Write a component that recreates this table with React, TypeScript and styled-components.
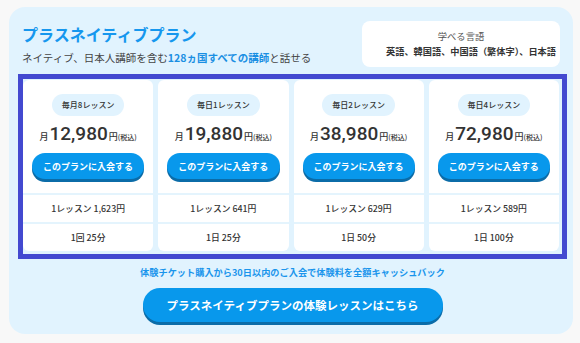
import React from 'react';
import styled, { createGlobalStyle } from 'styled-components';

const GlobalStyle = createGlobalStyle`
  html, body {
    margin: 0;
    padding: 0;
    background: #f8f8f8;
    font-family: "Noto Sans CJK JP", "Noto Sans", sans-serif;
    color: #333;
  }
`;

const Page = styled.div`
  padding: 7px 7px 6px 9px;
`;

const Panel = styled.section`
  background: #e1f3fe;
  border-radius: 16px;
  padding: 0 6px 12px 9px;
  display: flex;
  flex-direction: column;
  align-items: stretch;
`;

const Header = styled.header`
  display: flex;
  justify-content: space-between;
  align-items: flex-start;
  padding: 14px 7px 7px 4px;
`;

const TitleBlock = styled.div`
  padding-top: 3px;
`;

const Title = styled.h2`
  margin: 0;
  font-size: 16px;
  line-height: 20px;
  font-weight: 700;
  color: #1697ee;
`;

const Lead = styled.p`
  margin: 6px 0 0;
  font-size: 10.5px;
  line-height: 16px;
  color: #444;
  white-space: nowrap;
`;

const Accent = styled.span`
  color: #1a8fe3;
  font-weight: 600;
`;

const LangBox = styled.div`
  width: 198px;
  height: 46px;
  box-sizing: border-box;
  background: #fff;
  border-radius: 8px;
  padding: 8px 4px 0;
  display: flex;
  flex-direction: column;
`;

const LangLabel = styled.div`
  font-size: 9.3px;
  line-height: 14px;
  color: #555;
  text-align: center;
`;

const LangList = styled.div`
  font-size: 9.2px;
  line-height: 16px;
  font-weight: 700;
  color: #333;
  text-align: right;
  white-space: nowrap;
`;

const PlanFrame = styled.div`
  border: 5px solid #4349d0;
  padding: 1px 3px 3px 0;
  display: grid;
  grid-template-columns: repeat(4, 1fr);
  gap: 5px;
`;

const Card = styled.div`
  background: #fff;
  border-radius: 6px;
  display: flex;
  flex-direction: column;
`;

const CardTop = styled.div`
  display: flex;
  flex-direction: column;
  align-items: center;
  padding: 14px 9px 14px;
`;

const Badge = styled.span`
  height: 22px;
  line-height: 22px;
  padding: 0 10px;
  border-radius: 11px;
  background: #e1f3fe;
  font-size: 8px;
  font-weight: 500;
  color: #333;
`;

const Price = styled.div`
  margin-top: 6px;
  height: 24px;
  display: flex;
  align-items: baseline;
  color: #333;
  white-space: nowrap;
`;

const Unit = styled.span<{ $size: number }>`
  font-size: ${p => p.$size}px;
  font-weight: 500;
`;

const Amount = styled.span`
  font-family: Roboto, "Noto Sans", sans-serif;
  font-size: 19px;
  line-height: 24px;
  font-weight: 500;
  margin: 0 1px;
`;

const JoinButton = styled.button`
  margin-top: 7px;
  width: 100%;
  height: 26px;
  border: none;
  border-radius: 13px;
  background: #0898ec;
  box-shadow: 0 3px 0 #0b6ca8;
  color: #fff;
  font-family: inherit;
  font-size: 9px;
  font-weight: 700;
  cursor: pointer;
`;

const InfoRow = styled.div`
  height: 27px;
  border-top: 2px solid #e4f4fd;
  display: flex;
  align-items: center;
  justify-content: center;
  font-size: 8.8px;
  font-weight: 500;
  color: #333;
`;

const Notice = styled.p`
  margin: 7px 0 0;
  font-size: 9.2px;
  line-height: 12px;
  font-weight: 700;
  color: #1a95ec;
  text-align: center;
`;

const TrialButton = styled.button`
  align-self: center;
  margin-top: 10px;
  width: 300px;
  height: 34px;
  border: none;
  border-radius: 17px;
  background: #0898ec;
  box-shadow: 0 3px 0 #0b6ca8;
  color: #fff;
  font-family: inherit;
  font-size: 11.5px;
  font-weight: 700;
  cursor: pointer;
`;

interface Plan {
  label: string;
  price: string;
  perLesson: string;
  duration: string;
}

const plans: Plan[] = [
  { label: '毎月8レッスン', price: '12,980', perLesson: '1レッスン 1,623円', duration: '1回 25分' },
  { label: '毎日1レッスン', price: '19,880', perLesson: '1レッスン 641円', duration: '1日 25分' },
  { label: '毎日2レッスン', price: '38,980', perLesson: '1レッスン 629円', duration: '1日 50分' },
  { label: '毎日4レッスン', price: '72,980', perLesson: '1レッスン 589円', duration: '1日 100分' },
];

const PlanCard: React.FC<{ plan: Plan }> = ({ plan }) => (
  <Card>
    <CardTop>
      <Badge>{plan.label}</Badge>
      <Price>
        <Unit $size={9}>月</Unit>
        <Amount>{plan.price}</Amount>
        <Unit $size={9}>円</Unit>
        <Unit $size={7}>(税込)</Unit>
      </Price>
      <JoinButton>このプランに入会する</JoinButton>
    </CardTop>
    <InfoRow>{plan.perLesson}</InfoRow>
    <InfoRow>{plan.duration}</InfoRow>
  </Card>
);

export default function App() {
  return (
    <Page>
      <GlobalStyle />
      <Panel>
        <Header>
          <TitleBlock>
            <Title>プラスネイティブプラン</Title>
            <Lead>
              ネイティブ、日本人講師を含む<Accent>128ヵ国すべての講師</Accent>と話せる
            </Lead>
          </TitleBlock>
          <LangBox>
            <LangLabel>学べる言語</LangLabel>
            <LangList>英語、韓国語、中国語（繁体字）、日本語</LangList>
          </LangBox>
        </Header>
        <PlanFrame>
          {plans.map(p => (
            <PlanCard key={p.label} plan={p} />
          ))}
        </PlanFrame>
        <Notice>体験チケット購入から30日以内のご入会で体験料を全額キャッシュバック</Notice>
        <TrialButton>プラスネイティブプランの体験レッスンはこちら</TrialButton>
      </Panel>
    </Page>
  );
}
